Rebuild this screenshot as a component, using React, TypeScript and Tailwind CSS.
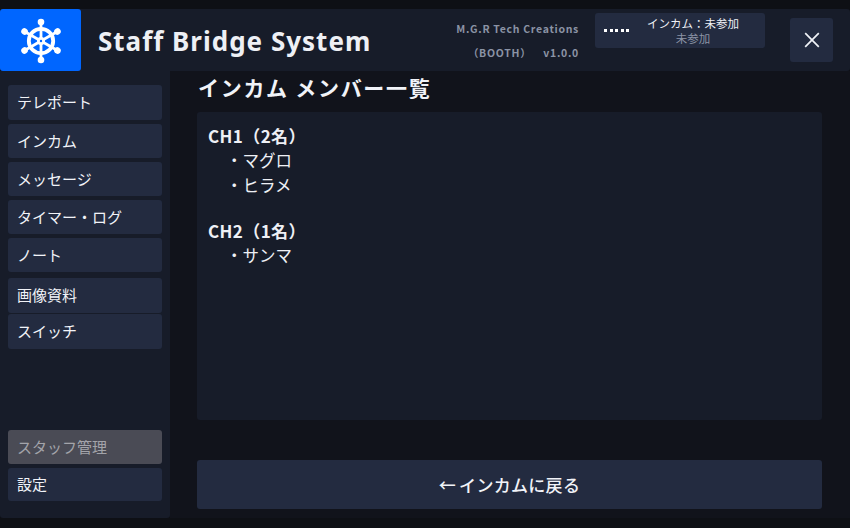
const menuTop = ['テレポート', 'インカム', 'メッセージ', 'タイマー・ログ', 'ノート']
const menuMid = ['画像資料', 'スイッチ']
const spokes = [0, 60, 120, 180, 240, 300]

function WheelLogo() {
  return (
    <svg width="46" height="46" viewBox="-23 -23 46 46" className="mt-[1px] text-white">
      <circle r="12.2" fill="none" stroke="currentColor" strokeWidth="3.8" />
      {spokes.map(a => (
        <g key={a} transform={`rotate(${a})`}>
          <line y1="0" y2="-18" stroke="currentColor" strokeWidth="2.8" />
          <circle cy="-19" r="3.3" fill="currentColor" />
        </g>
      ))}
      <circle r="4" fill="currentColor" />
      <circle r="1.2" fill="#0066ff" />
    </svg>
  )
}

function MenuButton({ label, height = 'h-[34px]' }: { label: string; height?: string }) {
  return (
    <button className={`${height} w-full rounded-[3px] bg-[#232b40] pl-[9px] text-left text-[15px] text-[#f1f3f8]`}>
      {label}
    </button>
  )
}

export default function App() {
  return (
    <div className="flex h-[528px] w-[850px] flex-col overflow-hidden bg-[#0e1015] pt-[9px] pb-[10px] font-['Noto_Sans_CJK_JP','Noto_Sans',sans-serif]">
      <header className="flex h-[62px] shrink-0 items-center rounded-[3px] bg-[#171c29]">
        <div className="flex h-[62px] w-[81px] items-center justify-center rounded-[3px] bg-[#0066ff]">
          <WheelLogo />
        </div>
        <h1 className="mt-[2px] ml-[17px] font-['Noto_Sans',sans-serif] text-[26px] font-bold tracking-[1px] text-[#eef0f5]">
          Staff Bridge System
        </h1>
        <div className="mt-[2px] mr-[16px] ml-auto flex flex-col items-end gap-[6px] text-[10.5px] leading-[18px] font-bold tracking-[0.7px] text-[#8b93a5]">
          <span>M.G.R Tech Creations</span>
          <span className="flex gap-[12px]">
            <span>（BOOTH）</span>
            <span>v1.0.0</span>
          </span>
        </div>
        <div className="mb-[20px] flex h-[35px] w-[170px] items-center rounded-[3px] bg-[#232b40] pl-[9px]">
          <div className="flex gap-[2.5px]">
            <span className="h-[3px] w-[3px] bg-white" />
            <span className="h-[3px] w-[3px] bg-white" />
            <span className="h-[3px] w-[3px] bg-white" />
            <span className="h-[3px] w-[3px] bg-white" />
            <span className="h-[3px] w-[3px] bg-white" />
          </div>
          <div className="mt-[1px] ml-[3px] flex w-[122px] flex-col items-center text-[11.5px] leading-[15px]">
            <span className="text-[#eef0f5]">インカム：未参加</span>
            <span className="text-[#8b93a5]">未参加</span>
          </div>
        </div>
        <button className="mr-[17px] ml-[25px] flex h-[44px] w-[43px] items-center justify-center rounded-[3px] bg-[#232b40]">
          <svg width="16" height="16" viewBox="0 0 16 16" fill="none" stroke="#f1f3f8" strokeWidth="1.7">
            <path d="M1.2 1.2 14.8 14.8M14.8 1.2 1.2 14.8" />
          </svg>
        </button>
      </header>
      <div className="flex min-h-0 flex-1">
        <aside className="flex w-[170px] shrink-0 flex-col rounded-b-[3px] bg-[#171c29] px-[8px] pt-[14px] pb-[17px]">
          <div className="flex flex-col gap-[4px]">
            {menuTop.map((m, i) => (
              <MenuButton key={m} label={m} height={i === 0 ? 'h-[35px]' : 'h-[34px]'} />
            ))}
          </div>
          <div className="mt-[6px] flex flex-col gap-[1px]">
            {menuMid.map(m => (
              <MenuButton key={m} label={m} height="h-[35px]" />
            ))}
          </div>
          <div className="mt-auto flex flex-col gap-[4px]">
            <button className="h-[34px] w-full rounded-[3px] bg-[#4a4b55] pl-[9px] text-left text-[15px] text-[#a3a4aa]">
              スタッフ管理
            </button>
            <MenuButton label="設定" height="h-[33px]" />
          </div>
        </aside>
        <main className="flex min-w-0 flex-1 flex-col bg-[#11131b] pr-[28px] pl-[27px]">
          <h2 className="mt-[2px] ml-[1px] text-[21px] leading-[28px] font-bold tracking-[1.7px] text-[#f1f3f8]">インカム メンバー一覧</h2>
          <section className="mt-[11px] h-[308px] rounded-[3px] bg-[#171c29] px-[11px] pt-[11px] text-[16.5px] leading-[25px] text-[#eef0f5]">
            <p className="text-[17px] font-bold tracking-[0.4px]">CH1（2名）</p>
            <p className="pl-[18px]">・マグロ</p>
            <p className="pl-[18px]">・ヒラメ</p>
            <p className="mt-[20px] text-[17px] font-bold tracking-[0.4px]">CH2（1名）</p>
            <p className="pl-[18px]">・サンマ</p>
          </section>
          <button className="mt-[40px] h-[49px] w-full rounded-[3px] bg-[#232b40] text-[17px] font-medium tracking-[0.3px] text-[#f1f3f8]">
            <span className="mr-[3px]">←</span>インカムに戻る
          </button>
        </main>
      </div>
    </div>
  )
}
